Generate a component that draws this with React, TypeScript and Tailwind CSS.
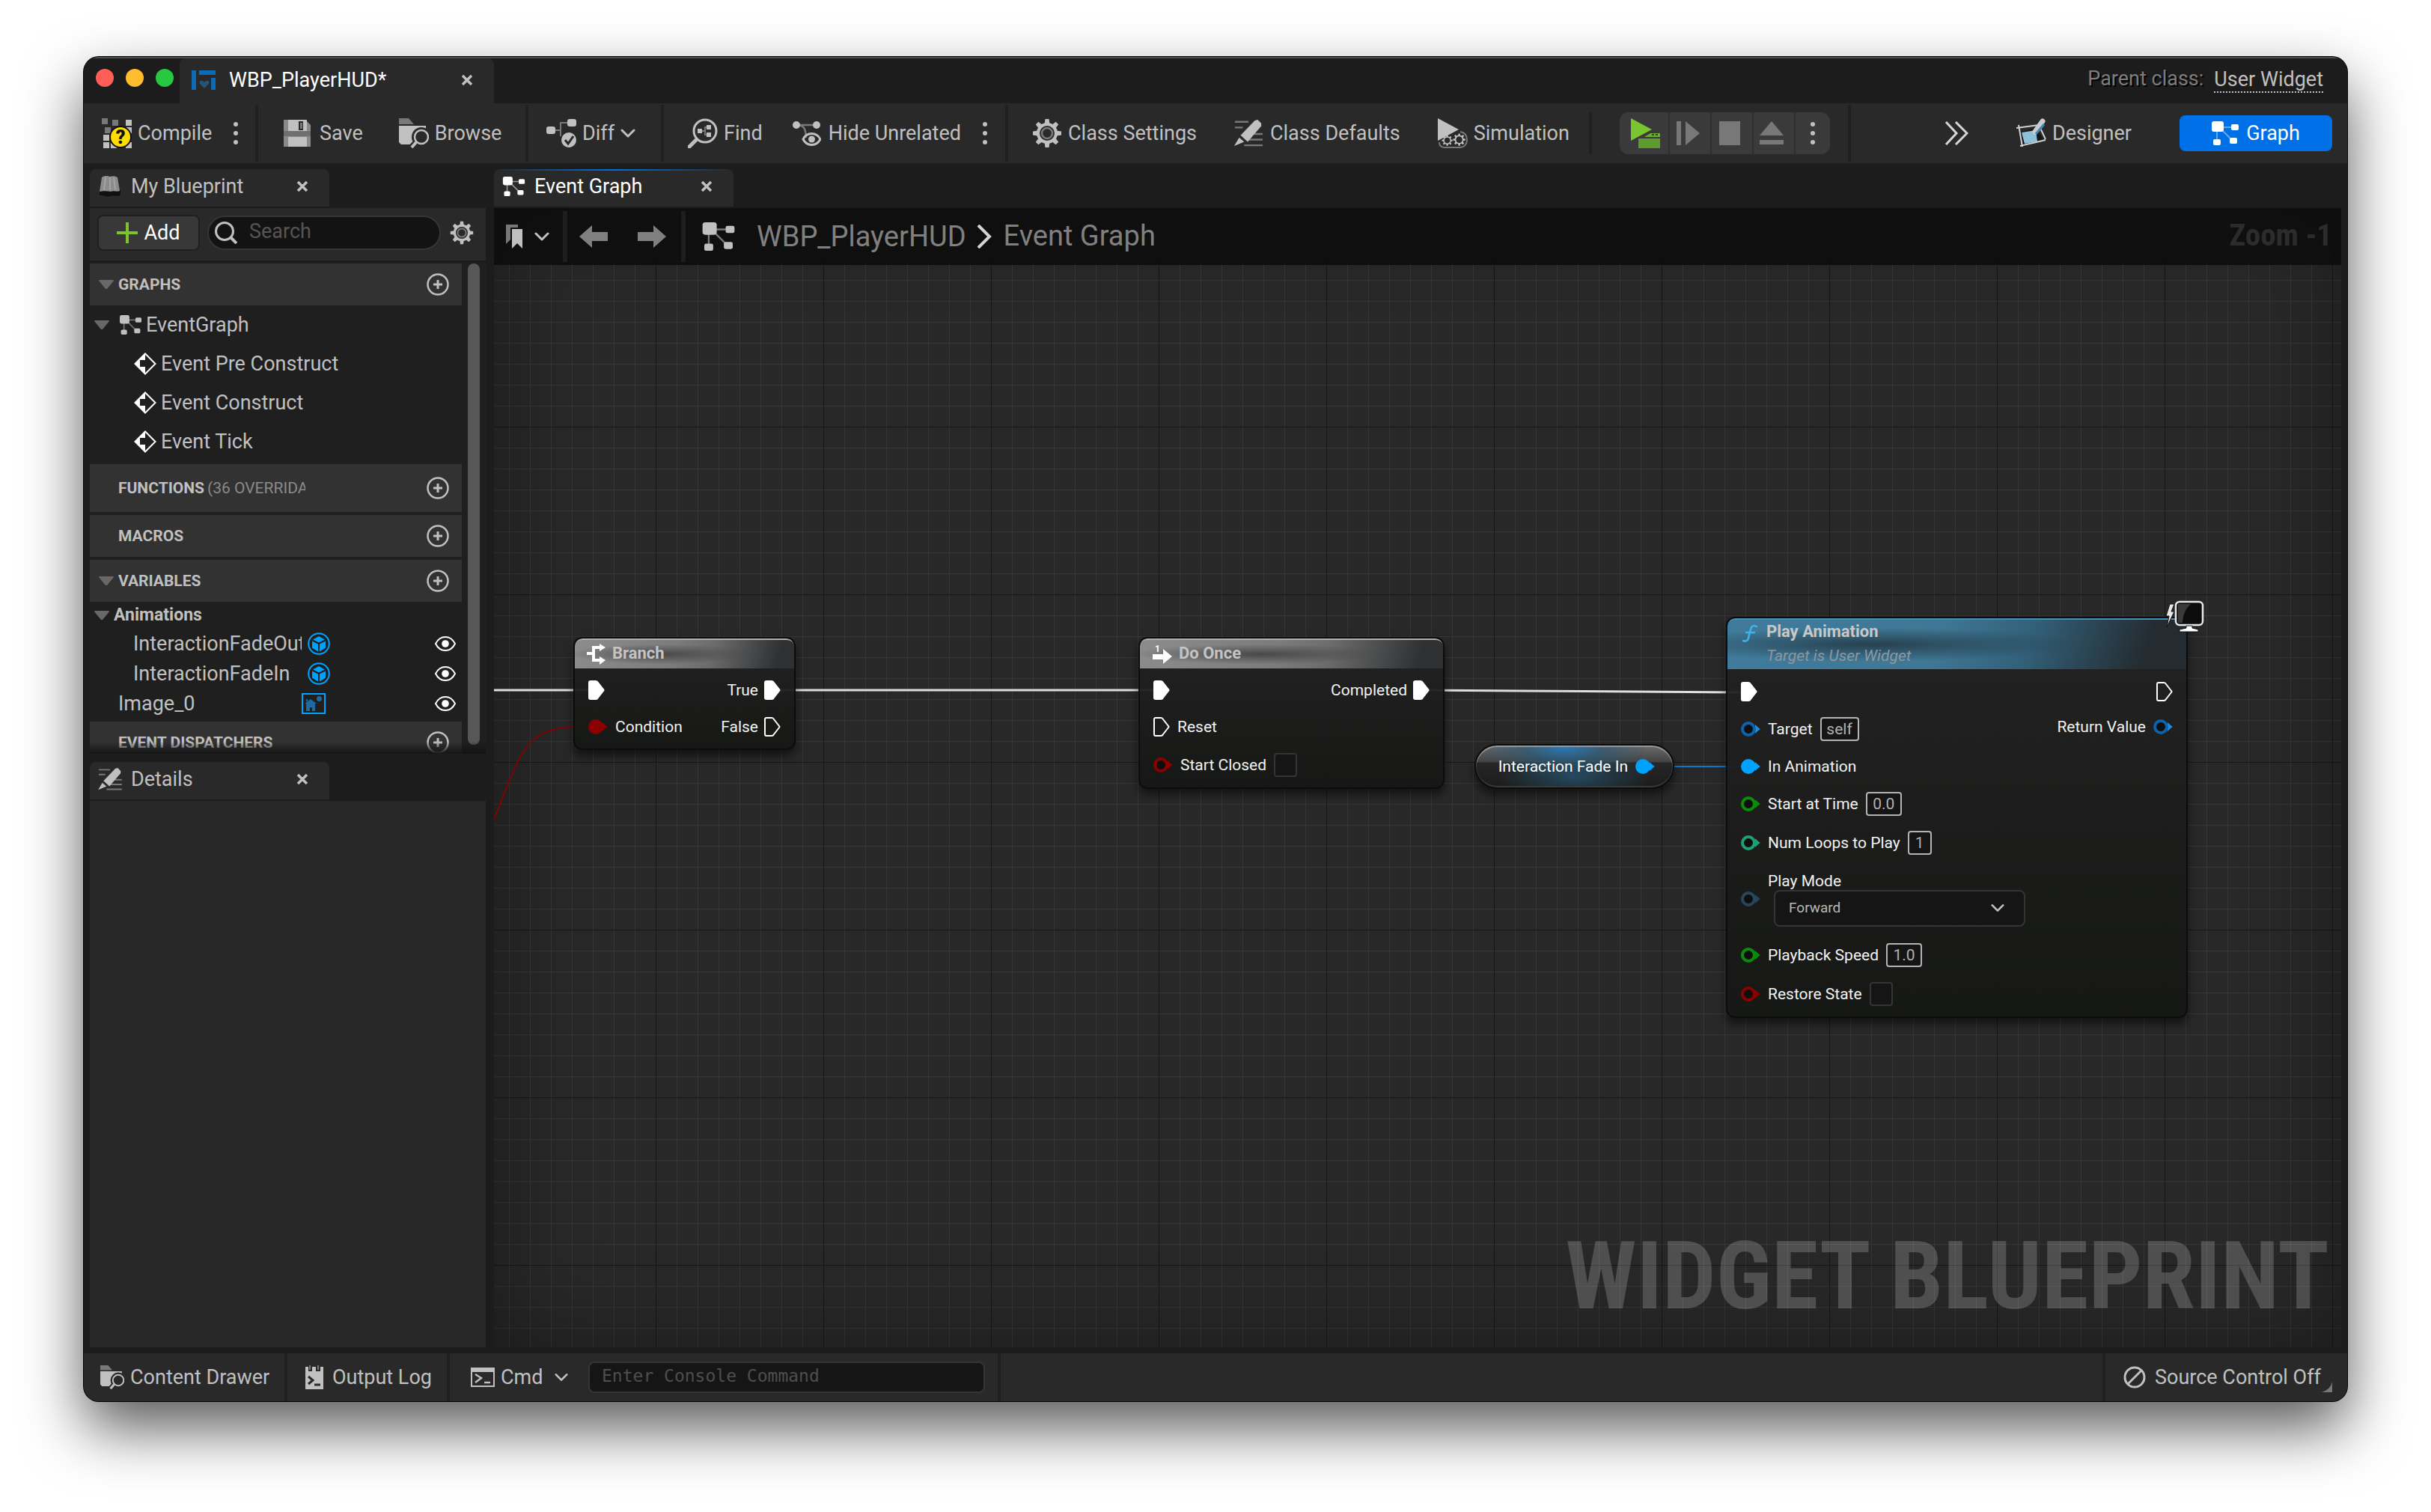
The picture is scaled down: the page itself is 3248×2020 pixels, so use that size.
import type { ReactNode } from "react";

type IconProps = { className?: string };

const L = "#c0c0c0";
const G = "#787878";

function GraphIcon({ className = "w-9 h-8", color = L, wire = G }: IconProps & { color?: string; wire?: string }) {
  return (
    <svg viewBox="0 0 36 32" className={`shrink-0 ${className}`} fill={color}>
      <g stroke={wire} strokeWidth="2">
        <path d="M14 8H28M7 12V26M12 10L27 25" fill="none" />
      </g>
      <rect width="16" height="14" rx="3" />
      <rect x="26" y="4" width="10" height="8" rx="2" />
      <rect x="2" y="24" width="10" height="8" rx="2" />
      <rect x="24" y="22" width="10" height="8" rx="2" />
    </svg>
  );
}

function WidgetIcon() {
  return (
    <svg viewBox="0 0 32 26" className="w-8 h-[26px] shrink-0" fill="#0d6bb5">
      <rect width="6" height="26" />
      <rect x="10" width="22" height="6" />
      <rect x="26" y="10" width="6" height="16" />
      <path d="M17 24L11 18C9 14 14 12 17 16C20 12 25 14 23 18Z" fill="#295372" />
    </svg>
  );
}

function CompileIcon() {
  return (
    <svg viewBox="0 0 40 40" className="size-10 shrink-0" fill={L}>
      <g fill={G}>
        <rect width="8" height="8" />
        <rect x="14" y="2" width="8" height="8" />
        <rect x="4" y="12" width="8" height="8" />
      </g>
      <rect x="32" y="2" width="8" height="8" />
      <rect x="32" y="12" width="8" height="8" />
      <rect x="2" y="22" width="8" height="8" />
      <rect x="2" y="32" width="8" height="8" />
      <rect x="12" y="32" width="8" height="8" />
      <rect x="32" y="32" width="8" height="8" />
      <circle cx="25" cy="25" r="14" fill="#ffdd00" stroke="#111" strokeWidth="2" />
      <text x="25" y="34" textAnchor="middle" fontSize="25" fontWeight="900" fontFamily="Roboto, sans-serif" fill="#111">
        ?
      </text>
    </svg>
  );
}

function SaveIcon() {
  return (
    <svg viewBox="0 0 36 36" className="size-9 shrink-0">
      <path d="M0 0H29L36 7V36H0Z" fill="#8a8a8a" />
      <rect x="6" width="25" height="15" fill={L} />
      <rect x="20" y="2" width="6" height="12" fill="#2a2a2a" />
      <rect x="22" y="4" width="3" height="8" fill={G} />
      <path d="M0 15H36V22H0Z" fill="#707070" />
      <rect x="6" y="23" width="25" height="13" fill={L} />
    </svg>
  );
}

function BrowseIcon({ className = "size-10" }: IconProps) {
  return (
    <svg viewBox="0 0 40 40" className={`shrink-0 ${className}`}>
      <path d="M0 0H13L20 8H0Z" fill={G} />
      <path d="M0 10H38V34H17L15 35H3L0 32Z" fill={L} />
      <circle cx="30" cy="25" r="13" fill="#292929" />
      <path d="M23 33L15 41" stroke="#292929" strokeWidth="9" />
      <rect x="36" y="10" width="4" height="8" fill="#292929" />
      <circle cx="30" cy="25" r="9" fill="none" stroke={L} strokeWidth="2.5" />
      <path d="M24 31L17 39" stroke={L} strokeWidth="4" />
    </svg>
  );
}

function DiffIcon() {
  return (
    <svg viewBox="0 0 40 40" className="size-10 shrink-0">
      <path d="M10 16H19V6H30M19 14V24" fill="none" stroke={G} strokeWidth="2" />
      <rect y="11" width="12" height="10" rx="3" fill={L} />
      <rect x="28" y="1" width="12" height="10" rx="3" fill={L} />
      <circle cx="30" cy="29" r="10" fill={L} />
      <path d="M25 29L29 34L36 24" fill="none" stroke="#292929" strokeWidth="3" />
    </svg>
  );
}

function FindIcon() {
  return (
    <svg viewBox="0 0 40 40" className="size-10 shrink-0">
      <circle cx="23" cy="17" r="15" fill="none" stroke={L} strokeWidth="3" />
      <path d="M11 29L2 38" stroke={L} strokeWidth="5" strokeLinecap="round" />
      <path d="M16 17H22M27 12H23V22H27" fill="none" stroke={G} strokeWidth="2" />
      <path d="M13 14H19V20H13ZM25 9H31V15H25ZM25 19H31V25H25Z" fill={L} />
    </svg>
  );
}

function HideIcon() {
  return (
    <svg viewBox="0 0 38 36" className="w-[38px] h-9 shrink-0">
      <path d="M5 7H32M7 7C18 8 17 16 18 24" fill="none" stroke={G} strokeWidth="2.5" />
      <circle cx="5" cy="7" r="5" fill={L} />
      <circle cx="32" cy="7" r="5" fill={L} />
      <path d="M14 26C19 16 32 16 37 26C32 36 19 36 14 26Z" fill="none" stroke={L} strokeWidth="3" />
      <circle cx="25.500" cy="26" r="4.500" fill={L} />
    </svg>
  );
}

function GearShape({ color = L, inner = G }: { color?: string; inner?: string }) {
  return (
    <g>
      <circle cx="20" cy="20" r="12" fill="none" stroke={color} strokeWidth="4" />
      <circle cx="20" cy="20" r="7" fill="none" stroke={inner} strokeWidth="2.500" />
      {[0, 45, 90, 135, 180, 225, 270, 315].map((a) => (
        <path key={a} d="M16.500 8L17.500 1H22.500L23.500 8Z" fill={color} transform={`rotate(${a} 20 20)`} />
      ))}
    </g>
  );
}

function GearIcon({ className = "size-10" }: IconProps) {
  return (
    <svg viewBox="0 0 40 40" className={`shrink-0 ${className}`}>
      <GearShape />
    </svg>
  );
}

function PencilIcon({ className = "size-[38px]" }: IconProps) {
  return (
    <svg viewBox="0 0 40 38" className={`shrink-0 ${className}`}>
      <path d="M1 3H20M1 11H12M28 20H40M21 28H40M14 36H40" stroke={G} strokeWidth="2.500" />
      <path d="M33 0L38 5V9L19 31L9 22L29 1Z" fill={L} />
      <path d="M7 25L14 31L0 37Z" fill={L} />
    </svg>
  );
}

function SimulationIcon() {
  return (
    <svg viewBox="0 0 40 40" className="size-10 shrink-0">
      <path d="M0 0L28 15L0 30Z" fill={L} />
      <path d="M2 32C2 37 5 39 10 39H29C36 39 39 34 39 29C39 23 36 19 30 18" fill="none" stroke={G} strokeWidth="2" />
      <g transform="translate(5 22) scale(.38)">
        <GearShape inner="#292929" />
      </g>
      <g transform="translate(20 20) scale(.43)">
        <GearShape inner="#292929" />
      </g>
    </svg>
  );
}

function PlayIcon() {
  return (
    <svg viewBox="0 0 40 40" className="size-10 shrink-0">
      <path d="M0 0L28 15L0 30Z" fill="#7bc32f" />
      <path d="M26 20H39V25H18Z" fill="#6cae2c" />
      <path d="M28 22H31M33 22H36" stroke="#2f4a18" strokeWidth="2" />
      <path d="M10 27H39V40H10Z" fill="#5f9a2c" />
    </svg>
  );
}

function DesignerIcon() {
  return (
    <svg viewBox="0 0 40 40" className="size-10 shrink-0">
      <path d="M6 18L26 13L36 28L10 38Z" fill="#151515" />
      <path d="M7 19L26 16L28 31L11 34Z" fill="#8fc0da" />
      <path d="M0 13L30 9M30 9L39 28M3 9L8 38M39 29L5 37" stroke="#d0d0d0" strokeWidth="2" fill="none" />
      <path d="M35 4L25 18" stroke="#c8ccd0" strokeWidth="7" strokeLinecap="round" />
      <path d="M37 8L26 21" stroke="#3f88b4" strokeWidth="3" />
    </svg>
  );
}

function BookIcon() {
  return (
    <svg viewBox="0 0 32 30" className="w-8 h-[30px] shrink-0">
      <path d="M2 20H30V26C26 30 20 26 16 28C10 30 6 26 2 27Z" fill="#101010" />
      <path d="M5 3C9 0 13 1 16 2C19 1 23 1 26 3L29 21C25 23 21 20 17 22C12 21 6 21 2 22Z" fill="#8c8c8c" />
      <path d="M10 3L8 20M16 3V20M21 3L23 20" stroke="#a4a4a4" strokeWidth="2" />
    </svg>
  );
}

function Chevron({ className = "w-5 h-3" }: IconProps) {
  return (
    <svg viewBox="0 0 20 12" className={`shrink-0 ${className}`} fill="none" stroke={L} strokeWidth="3" strokeLinecap="round" strokeLinejoin="round">
      <path d="M2 2L10 10L18 2" />
    </svg>
  );
}

function Dots({ label }: { label: string }) {
  return (
    <button aria-label={label} className="shrink-0">
      <svg viewBox="0 0 8 32" className="w-2 h-8" fill={L}>
        <circle cx="4" cy="4" r="3" />
        <circle cx="4" cy="16" r="3" />
        <circle cx="4" cy="28" r="3" />
      </svg>
    </button>
  );
}

function Close({ label }: { label: string }) {
  return (
    <button aria-label={label} className="shrink-0">
      <svg viewBox="0 0 16 16" className="size-4" stroke={L} strokeWidth="3.500">
        <path d="M2 2L14 14M14 2L2 14" />
      </svg>
    </button>
  );
}

function PlusCircle({ label }: { label: string }) {
  return (
    <button aria-label={label} className="mr-[17px] shrink-0">
      <svg viewBox="0 0 30 30" className="size-[30px]" fill="none" stroke={L} strokeWidth="2.500">
        <circle cx="15" cy="15" r="13.500" />
        <path d="M15 9V21M9 15H21" strokeWidth="3" />
      </svg>
    </button>
  );
}

function Caret() {
  return (
    <svg viewBox="0 0 20 12" className="w-5 h-3 shrink-0" fill="#686868">
      <path d="M1 0H19Q20 0 20 1L11 12H9L0 1Q0 0 1 0Z" />
    </svg>
  );
}

function EventIcon() {
  return (
    <svg viewBox="0 0 30 30" className="size-[30px] shrink-0">
      <path d="M15 1.500L28.500 15L15 28.500L1.500 15Z" fill="none" stroke="#fff" strokeWidth="2" />
      <path d="M15 1V10H8V19H15V29L1 15Z" fill="#fff" />
    </svg>
  );
}

function ObjectIcon() {
  return (
    <svg viewBox="0 0 30 30" className="ml-2 size-[30px] shrink-0" fill="#00a2ff">
      <circle cx="15" cy="15" r="13.800" fill="none" stroke="#00a2ff" strokeWidth="2" />
      <path d="M15 5L23 9.500L15 13.500L7 9.500ZM6 11.500L14 15.500V25.500L6 20.500ZM24 11.500L16 15.500V25.500L24 20.500Z" />
    </svg>
  );
}

function ImageIcon() {
  return (
    <svg viewBox="0 0 32 28" className="w-8 h-7 shrink-0">
      <rect x="1" y="1" width="30" height="26" fill="none" stroke="#00a2ff" strokeWidth="2" />
      <path d="M4 14L12 8L20 14H18V24H14V19H11V24H6V14ZM6 8H8V11H6Z" fill="#1d6ca0" />
      <circle cx="23.500" cy="7.500" r="3.500" fill="#1d6ca0" />
    </svg>
  );
}

function EyeIcon() {
  return (
    <svg viewBox="0 0 28 20" className="w-7 h-5">
      <path d="M1 10C7 -2 21 -2 27 10C21 22 7 22 1 10Z" fill="none" stroke="#fff" strokeWidth="2" />
      <circle cx="14" cy="10" r="4.800" fill="#fff" />
    </svg>
  );
}

function Sep({ className = "h-19" }: IconProps) {
  return <div className={`w-1 shrink-0 bg-[#202020] ${className}`} />;
}

function ToolButton({ icon, children, gap = "gap-2" }: { icon: ReactNode; children: ReactNode; gap?: string }) {
  return (
    <button className={`flex items-center whitespace-nowrap shrink-0 ${gap}`}>
      {icon}
      <span>{children}</span>
    </button>
  );
}

function TitleBar() {
  return (
    <header className="flex h-[62px] shrink-0 items-stretch border-t-2 border-[#4b4d4b] bg-[#1c1c1c]">
      <div className="flex w-32 shrink-0 items-center gap-4 pb-2 pl-4">
        <button aria-label="Close window" className="size-6 rounded-full bg-[#ff5f57]" />
        <button aria-label="Minimize window" className="size-6 rounded-full bg-[#febc2e]" />
        <button aria-label="Zoom window" className="size-6 rounded-full bg-[#28c840]" />
      </div>
      <div className="flex w-[420px] shrink-0 items-center rounded-t-lg bg-[#292929] pb-0.5 pl-4 pr-7">
        <WidgetIcon />
        <button className="ml-[18px] flex-1 text-left text-white">WBP_PlayerHUD*</button>
        <Close label="Close WBP_PlayerHUD" />
      </div>
      <div className="flex flex-1 items-center justify-end gap-3.5 pb-0.5 pr-8">
        <span className="pb-1 text-[#7c7c7c] [text-shadow:2px_2px_0_#000]">Parent class:</span>
        <a href="#user-widget" className="border-b-2 border-dotted border-[#c0c0c0]">
          User Widget
        </a>
      </div>
    </header>
  );
}

function Toolbar() {
  return (
    <div className="flex h-20 shrink-0 items-center bg-[#292929]">
      <div className="flex w-[229px] shrink-0 items-center gap-7 pl-6">
        <ToolButton icon={<CompileIcon />}>Compile</ToolButton>
        <Dots label="Compile options" />
      </div>
      <Sep />
      <div className="flex w-[357px] shrink-0 items-center gap-12 pl-[34px]">
        <ToolButton icon={<SaveIcon />} gap="gap-3">Save</ToolButton>
        <ToolButton icon={<BrowseIcon />}>Browse</ToolButton>
      </div>
      <Sep />
      <div className="flex w-[177px] shrink-0 items-center gap-2 pl-6">
        <ToolButton icon={<DiffIcon />}>Diff</ToolButton>
        <Chevron />
      </div>
      <Sep />
      <div className="flex w-[456px] shrink-0 items-center pl-8">
        <ToolButton icon={<FindIcon />}>Find</ToolButton>
        <div className="ml-10 flex items-center gap-7">
          <ToolButton icon={<HideIcon />} gap="gap-2.5">Hide Unrelated</ToolButton>
          <Dots label="Hide unrelated options" />
        </div>
      </div>
      <Sep />
      <div className="flex w-[776px] shrink-0 items-center gap-[50px] pl-8">
        <ToolButton icon={<GearIcon />}>Class Settings</ToolButton>
        <ToolButton icon={<PencilIcon />} gap="gap-2.5">Class Defaults</ToolButton>
        <ToolButton icon={<SimulationIcon />}>Simulation</ToolButton>
      </div>
      <Sep className="h-14" />
      <div className="flex w-[342px] shrink-0 items-center pl-[37px]">
        <div className="flex h-14 items-stretch gap-0.5 overflow-hidden rounded-xl bg-[#2f2f2f]">
          <button aria-label="Play" className="flex w-[65px] items-center bg-[#3a3a3a] pl-[15px]">
            <PlayIcon />
          </button>
          <button aria-label="Step" className="flex w-[54px] items-center justify-center bg-[#3a3a3a] pr-1">
            <svg viewBox="0 0 32 32" className="size-8" fill={G}>
              <path d="M0 0H6V32H0ZM12 0L31 16L12 32Z" />
            </svg>
          </button>
          <button aria-label="Stop" className="flex w-[54px] items-center justify-center bg-[#3a3a3a] pr-1.5">
            <svg viewBox="0 0 28 32" className="h-8 w-7" fill={G}>
              <rect width="28" height="32" />
            </svg>
          </button>
          <button aria-label="Eject" className="flex w-[54px] items-center justify-center bg-[#3a3a3a] pr-1.5">
            <svg viewBox="0 0 32 32" className="size-8" fill={G}>
              <path d="M16 0L32 19H0ZM0 25H32V31H0Z" />
            </svg>
          </button>
          <div className="flex w-[46px] items-center justify-center bg-[#3a3a3a]">
            <Dots label="Play options" />
          </div>
        </div>
      </div>
      <Sep />
      <div className="flex flex-1 items-center justify-end gap-16 pr-5">
        <button aria-label="More tools">
          <svg viewBox="0 0 32 32" className="size-8" fill="none" stroke="#d6d6d6" strokeWidth="3">
            <path d="M2 1L16 16L2 31M15 1L30 16L15 31" />
          </svg>
        </button>
        <ToolButton icon={<DesignerIcon />}>Designer</ToolButton>
        <button className="flex h-12 w-[204px] items-center justify-center gap-2.5 rounded-lg bg-[#0070e8] text-white">
          <GraphIcon color="#fff" wire="#5fa8f0" />
          Graph
        </button>
      </div>
    </div>
  );
}

function PanelTab({ icon, title, active = false }: { icon: ReactNode; title: string; active?: boolean }) {
  return (
    <div className={`relative flex h-[50px] w-80 shrink-0 items-center gap-3 overflow-hidden rounded-t-lg bg-[#292929] pb-1 pl-[11px] pr-7 ${active ? "text-white" : ""}`}>
      {active && <div className="absolute inset-x-0 top-0 h-0.5 bg-linear-to-r from-transparent via-[#0070e0] to-transparent" />}
      {icon}
      <button className="flex-1 text-left">{title}</button>
      <Close label={`Close ${title}`} />
    </div>
  );
}

function SectionHeader({ title, note, caret, height = "h-14" }: { title: string; note?: string; caret?: boolean; height?: string }) {
  return (
    <div className={`flex shrink-0 items-center bg-[#323232] pl-3 text-[21px] ${height}`}>
      <div className="flex w-[26px] shrink-0">{caret && <Caret />}</div>
      <div className="flex flex-1 items-center">
        <div className="flex max-w-[250px] gap-1 overflow-hidden whitespace-nowrap">
          <h2 className="font-bold">{title}</h2>
          {note && <span className="text-[#8a8a8a]">{note}</span>}
        </div>
      </div>
      <PlusCircle label={`Add to ${title.toLowerCase()}`} />
    </div>
  );
}

function VariableRow({ name, indent, icon }: { name: string; indent: string; icon: ReactNode }) {
  return (
    <li className={`flex h-10 items-center ${indent}`}>
      <button className="flex-1 overflow-hidden whitespace-nowrap text-left">{name}</button>
      <div className="flex w-[214px] shrink-0 items-center justify-between pr-2">
        {icon}
        <button aria-label={`Toggle ${name} visibility`}>
          <EyeIcon />
        </button>
      </div>
    </li>
  );
}

function Sidebar() {
  return (
    <aside className="flex w-[529px] shrink-0 flex-col">
      <PanelTab icon={<BookIcon />} title="My Blueprint" />
      <div className="mt-0.5 flex h-[70px] shrink-0 items-center bg-[#292929] pb-1 pl-2.5 pr-4">
        <button className="flex h-12 w-[137px] items-center justify-center gap-2 rounded-lg border-2 border-[#1f1f1f] bg-[#383838] text-white">
          <svg viewBox="0 0 28 28" className="size-7" stroke="#7bc32f" strokeWidth="4">
            <path d="M14 0V28M0 14H28" />
          </svg>
          Add
        </button>
        <label className="ml-2.5 flex h-[46px] w-[312px] items-center gap-4 rounded-full border-2 border-[#353535] bg-[#131313] pl-2">
          <svg viewBox="0 0 30 30" className="size-[30px] shrink-0" fill="none" stroke={L} strokeWidth="3">
            <circle cx="13" cy="13" r="11.500" />
            <path d="M21 21L29 29" strokeWidth="4" />
          </svg>
          <input aria-label="Search blueprint" placeholder="Search" className="min-w-0 flex-1 bg-transparent pb-1 outline-none placeholder:text-[#555]" />
        </label>
        <button aria-label="Blueprint view settings" className="ml-3">
          <GearIcon className="size-8" />
        </button>
      </div>
      <div className="relative mt-1 flex h-[655px] shrink-0 overflow-hidden bg-[#1f1f1f]">
        <div className="flex w-[497px] shrink-0 flex-col">
          <SectionHeader title="GRAPHS" caret />
          <ul className="shrink-0">
            <li className="flex h-13 items-center pl-1.5">
              <Caret />
              <GraphIcon className="ml-3.5 h-[26px] w-[29px]" />
              <button className="ml-1.5">EventGraph</button>
            </li>
            {["Event Pre Construct", "Event Construct", "Event Tick"].map((name) => (
              <li key={name} className="flex h-13 items-center gap-1.5 pl-[59px]">
                <EventIcon />
                <button>{name}</button>
              </li>
            ))}
          </ul>
          <div className="mt-1 flex shrink-0 flex-col gap-1">
            <SectionHeader title="FUNCTIONS" note="(36 OVERRIDABLE)" height="h-16" />
            <SectionHeader title="MACROS" />
            <SectionHeader title="VARIABLES" caret />
          </div>
          <div className="flex h-9 shrink-0 items-center gap-1.5 pl-1.5">
            <Caret />
            <h3 className="text-[23px] font-bold">Animations</h3>
          </div>
          <ul className="mb-1 shrink-0">
            <VariableRow name="InteractionFadeOut" indent="pl-[58px]" icon={<ObjectIcon />} />
            <VariableRow name="InteractionFadeIn" indent="pl-[58px]" icon={<ObjectIcon />} />
            <VariableRow name="Image_0" indent="pl-[38px]" icon={<ImageIcon />} />
          </ul>
          <SectionHeader title="EVENT DISPATCHERS" />
        </div>
        <div className="ml-2 h-[643px] w-4 rounded-full bg-[#575757]" />
        <div className="absolute inset-x-0 bottom-0 h-4 bg-linear-to-t from-[#141414] to-transparent" />
      </div>
      <div className="mt-[11px] shrink-0">
        <PanelTab icon={<PencilIcon className="h-[30px] w-8" />} title="Details" />
      </div>
      <div className="mt-0.5 flex-1 bg-[#282828]" />
    </aside>
  );
}

function ExecPin({ filled = false }: { filled?: boolean }) {
  return (
    <svg viewBox="0 0 22 26" className="h-[26px] w-[22px] shrink-0" fill={filled ? "#fff" : "none"} stroke="#fff" strokeWidth="2" strokeLinejoin="round">
      <path d="M1 3Q1 1 3 1H10Q12 1 13 3L20 12Q21 13 20 14L13 23Q12 25 10 25H3Q1 25 1 23Z" />
    </svg>
  );
}

function DataPin({ color, tip = color, filled = false }: { color: string; tip?: string; filled?: boolean }) {
  return (
    <svg viewBox="0 0 26 20" className="h-5 w-[26px] shrink-0">
      <path d="M19 4Q24 9 26 10Q24 11 19 16Z" fill={tip} />
      <circle cx="10" cy="10" r="8" fill={filled ? color : "#0e0e0e"} stroke={color} strokeWidth="4" />
    </svg>
  );
}

function Row({ children, className = "h-[50px] gap-2.5" }: { children?: ReactNode; className?: string }) {
  return <div className={`flex items-center whitespace-nowrap ${className}`}>{children}</div>;
}

function CheckField({ label }: { label: string }) {
  return (
    <label className="flex items-center gap-2.5">
      {label}
      <input type="checkbox" className="h-8 w-[31px] appearance-none rounded border-2 border-[#343434] bg-[#151515]" />
    </label>
  );
}

function ValueField({ label, value, width }: { label: string; value: string; width: string }) {
  return (
    <label className="flex items-center gap-2.5">
      {label}
      <input defaultValue={value} className={`h-8 rounded border-2 border-[#b4b4b4] bg-[#151515] text-center text-[21px] text-[#b0b0b0] outline-none ${width}`} />
    </label>
  );
}

const nodeBox =
  "absolute flex flex-col overflow-hidden rounded-xl border-2 border-[#0c0c0c] bg-linear-to-b from-[#222222f2] to-[#151714f2] text-[21px] leading-6 text-[#f2f2f2] shadow-[0_8px_12px_rgba(0,0,0,0.5)]";

function GrayHeader({ icon, title, gap }: { icon: ReactNode; title: string; gap: string }) {
  return (
    <div className={`flex h-10 shrink-0 items-center rounded-t-[10px] border-t-2 border-[#b0b0b0] bg-[radial-gradient(ellipse_at_40%_50%,#484848_0%,#48484800_50%),linear-gradient(105deg,#8c8c8c_0%,#7c7c7c_45%,#6c6c6c_62%,#2e3032_92%)] pb-0.5 pl-4 text-[22px] font-bold text-[#c4c4c4] ${gap}`}>
      {icon}
      {title}
    </div>
  );
}

function BranchNode() {
  return (
    <section aria-label="Branch" className={`${nodeBox} left-[106px] top-[573px] h-[151px] w-[297px]`}>
      <GrayHeader
        title="Branch"
        gap="gap-2"
        icon={
          <svg viewBox="0 0 26 28" className="mt-0.5 h-7 w-[26px]">
            <path d="M0 13H8M18 5H9V22H18" fill="none" stroke="#fff" strokeWidth="4" />
            <path d="M17 0L25 5L17 10ZM17 17L25 22L17 28Z" fill="#fff" />
          </svg>
        }
      />
      <div className="flex justify-between px-4.5 pt-1">
        <div>
          <Row><ExecPin filled /></Row>
          <Row className="h-12 gap-2.5"><DataPin color="#8b0000" filled />Condition</Row>
        </div>
        <div className="flex flex-col items-end">
          <Row className="h-[50px] gap-2">True<ExecPin filled /></Row>
          <Row className="h-12 gap-2">False<ExecPin /></Row>
        </div>
      </div>
    </section>
  );
}

function DoOnceNode() {
  return (
    <section aria-label="Do Once" className={`${nodeBox} left-[861px] top-[573px] h-[203px] w-[409px]`}>
      <GrayHeader
        title="Do Once"
        gap="gap-2"
        icon={
          <svg viewBox="0 0 28 28" className="mt-0.5 size-7">
            <path d="M1 14H15V7L27 17L15 27V21H1Z" fill="#fff" />
            <text x="4" y="11" fontSize="12" fontWeight="700" fontFamily="Roboto, sans-serif" fill="#fff">1</text>
          </svg>
        }
      />
      <div className="flex justify-between px-4.5 pt-1">
        <div>
          <Row><ExecPin filled /></Row>
          <Row className="h-12 gap-2.5"><ExecPin />Reset</Row>
          <Row className="h-[54px] gap-2.5"><DataPin color="#8b0000" /><CheckField label="Start Closed" /></Row>
        </div>
        <Row className="h-[50px] gap-2">Completed<ExecPin filled /></Row>
      </div>
    </section>
  );
}

function FadeInNode() {
  return (
    <section aria-label="Interaction Fade In" className="absolute left-[1310px] top-[716px] flex h-[60px] w-[267px] items-center justify-end gap-2.5 rounded-[30px] border-2 border-[#0c0c0c] bg-[radial-gradient(ellipse_at_45%_5%,#2478bce0_0%,#2a5874b0_25%,transparent_55%),radial-gradient(ellipse_at_50%_75%,#23485e_0%,transparent_55%),linear-gradient(to_bottom,#6a6a6a_0%,#444_38%,#262626_42%,#1c1c1c_100%)] pr-6 text-[21px] leading-6 text-white shadow-[inset_0_2px_1px_#9a9a9a,inset_0_-2px_1px_#3a3a3a,0_8px_12px_rgba(0,0,0,0.5)]">
      Interaction Fade In
      <DataPin color="#00a2ff" filled />
    </section>
  );
}

function PlayAnimationNode() {
  return (
    <>
      <section aria-label="Play Animation" className={`${nodeBox} left-[1646px] top-[546px] h-[536px] w-[617px]`}>
        <div className="flex h-[68px] shrink-0 gap-3 rounded-t-[10px] border-t-2 border-[#4a8fb8] bg-[radial-gradient(ellipse_at_32%_50%,#27404e_0%,#27404e00_48%),linear-gradient(110deg,#3f7b9c_0%,#3f7896_45%,#326079_65%,#242c31_90%)] pl-5">
          <svg viewBox="0 0 20 24" className="mt-1.5 h-6 w-5" fill="none" stroke="#3fb2ee" strokeWidth="2.500" strokeLinecap="round">
            <path d="M1 22C7 24 8 20 9 14L11 7C12 2 15 1 19 3M5 11H16" />
          </svg>
          <div>
            <h3 className="text-[22px] leading-8 font-bold text-[#c8c8c8]">Play Animation</h3>
            <p className="text-[21px] leading-8 text-[#8d989e] italic">Target is User Widget</p>
          </div>
        </div>
        <div className="flex justify-between px-4.5 pt-[5px]">
          <div>
            <Row><ExecPin filled /></Row>
            <Row><DataPin color="#0d62ae" tip="#1f8fe0" /><ValueField label="Target" value="self" width="w-[52px]" /></Row>
            <Row><DataPin color="#00a2ff" filled />In Animation</Row>
            <Row><DataPin color="#0a8c0a" /><ValueField label="Start at Time" value="0.0" width="w-12" /></Row>
            <Row className="h-[54px] gap-2.5"><DataPin color="#1f9f72" /><ValueField label="Num Loops to Play" value="1" width="w-8" /></Row>
            <Row className="h-24 gap-2.5">
              <DataPin color="#28465a" />
              <label className="flex flex-col">
                Play Mode
                <span className="relative ml-2 flex items-center">
                  <select className="h-[49px] w-[336px] appearance-none rounded-lg border-2 border-[#343434] bg-[#151515] pl-4.5 text-[19px] text-[#b8b8b8] outline-none">
                    <option>Forward</option>
                  </select>
                  <Chevron className="pointer-events-none absolute right-7 h-3 w-[18px]" />
                </span>
              </label>
            </Row>
            <Row className="h-[54px] gap-2.5"><DataPin color="#0a8c0a" /><ValueField label="Playback Speed" value="1.0" width="w-12" /></Row>
            <Row><DataPin color="#8b0000" /><CheckField label="Restore State" /></Row>
          </div>
          <div className="flex flex-col items-end">
            <Row><ExecPin /></Row>
            <Row className="h-11 gap-2.5">Return Value<DataPin color="#0d62ae" tip="#1f8fe0" /></Row>
          </div>
        </div>
      </section>
      <svg viewBox="0 0 52 46" className="absolute left-[2233px] top-[522px] h-[46px] w-[52px]">
        <path d="M6 7H12L8 17H12L2 38L5 23H1Z" fill="#e8e8e8" stroke="#111" strokeWidth="1" />
        <rect x="14" y="4" width="36" height="31" rx="5" fill="#0c0c0c" stroke="#e8e8e8" strokeWidth="2.500" />
        <path d="M17 7H34C26 14 24 22 23 32H17Z" fill="#3a3a3a" />
        <path d="M28 36H36V39L44 41V44H19V41L28 39Z" fill="#fff" stroke="#111" strokeWidth="1" />
      </svg>
    </>
  );
}

function GraphPanel() {
  return (
    <main className="flex min-w-0 flex-1 flex-col">
      <PanelTab icon={<GraphIcon className="h-[26px] w-[31px]" color="#fff" wire="#999" />} title="Event Graph" active />
      <div className="relative mt-0.5 flex-1 overflow-hidden bg-[#282828] bg-[linear-gradient(to_right,#181818_1px,transparent_1px),linear-gradient(to_bottom,#181818_1px,transparent_1px),linear-gradient(to_right,#363636_1px,transparent_1px),linear-gradient(to_bottom,#363636_1px,transparent_1px)] bg-size-[224px_224px,224px_224px,28px_28px,28px_28px] bg-position-[216px_0,0_68px,20px_0,0_12px]">
        <div className="absolute inset-0 shadow-[inset_0_0_120px_rgba(0,0,0,0.35)]" />
        <div className="relative flex h-[76px] items-center bg-[#0c0c0cd9] text-[38px] text-[#808080]">
          <button aria-label="Bookmarks" className="ml-4 flex items-center gap-4">
            <svg viewBox="0 0 22 32" className="h-8 w-[22px]">
              <path d="M0 0H16V4H6V20L0 26Z" fill={G} />
              <path d="M8 6H22V32L15 25L8 32Z" fill={L} />
            </svg>
            <Chevron />
          </button>
          <div className="ml-[18px] h-17 w-1.5 bg-[#1e1e1e]" />
          <button aria-label="Back" className="ml-4">
            <svg viewBox="0 0 38 30" className="h-[30px] w-[38px]" fill="#808080">
              <path d="M17 0V9H38V21H17V30L0 15Z" />
            </svg>
          </button>
          <button aria-label="Forward" className="ml-10">
            <svg viewBox="0 0 38 30" className="h-[30px] w-[38px]" fill="#808080">
              <path d="M21 0V9H0V21H21V30L38 15Z" />
            </svg>
          </button>
          <div className="ml-5 h-17 w-1.5 bg-[#1e1e1e]" />
          <GraphIcon className="ml-[22px] h-[38px] w-11" />
          <button className="ml-[29px]">WBP_PlayerHUD</button>
          <svg viewBox="0 0 20 32" className="ml-3.5 h-8 w-5" fill="none" stroke="#d4d4d4" strokeWidth="4">
            <path d="M2 1L17 16L2 31" />
          </svg>
          <span className="ml-4 pb-0.5">Event Graph</span>
          <span className="ml-auto mr-3 pb-1 font-['Roboto_Condensed',Roboto,sans-serif] text-[41px] font-bold text-[#2c2c2c]">Zoom -1</span>
        </div>
        <p className="absolute bottom-5 right-4 font-['Roboto_Condensed',Roboto,sans-serif] text-[127px] leading-[150px] font-bold whitespace-nowrap text-[#ffffff30]">WIDGET BLUEPRINT</p>
        <svg className="absolute left-0 top-0 h-full w-full" fill="none">
          <path d="M0 644H126M382 644H882M1228 644C1400 644 1500 647 1666 647" stroke="#dcdedc" strokeWidth="3" />
          <path d="M0 817C40 715 42 694 122 692" stroke="#7d0505" strokeWidth="2" />
          <path d="M1550 746H1668" stroke="#0a78cc" strokeWidth="2" />
        </svg>
        <BranchNode />
        <DoOnceNode />
        <FadeInNode />
        <PlayAnimationNode />
      </div>
    </main>
  );
}

function StatusBar() {
  return (
    <footer className="flex h-16 shrink-0 items-stretch bg-[#292929] pl-0.5">
      <div className="flex w-[266px] shrink-0 items-center pl-5">
        <ToolButton icon={<BrowseIcon className="size-8" />}>Content Drawer</ToolButton>
      </div>
      <Sep className="h-16" />
      <div className="flex w-[213px] shrink-0 items-center pl-6">
        <ToolButton
          gap="gap-3"
          icon={
            <svg viewBox="0 0 24 32" className="h-8 w-6">
              <path d="M0 2H4V8H9V2H14V8H20V2H24V32H0Z" fill={L} />
              <path d="M6 0V6M17 0V6" stroke={G} strokeWidth="2" />
              <path d="M4 15L10 20L4 25M12 26H20" stroke="#292929" strokeWidth="3" fill="none" />
            </svg>
          }
        >
          Output Log
        </ToolButton>
      </div>
      <Sep className="h-16" />
      <div className="flex w-[732px] shrink-0 items-center pl-7">
        <ToolButton
          icon={
            <svg viewBox="0 0 32 26" className="h-[26px] w-8">
              <path d="M1 1H31V25H1Z" fill="none" stroke={L} strokeWidth="2" />
              <path d="M0 0H32V6H0Z" fill={L} />
              <path d="M6 9L14 14L6 20M18 20H26" stroke={L} strokeWidth="2.500" fill="none" />
            </svg>
          }
        >
          Cmd
        </ToolButton>
        <Chevron className="ml-4 h-3 w-[18px]" />
        <input aria-label="Console command" placeholder="Enter Console Command" className="ml-auto mr-[17px] h-[42px] w-[530px] rounded-lg border-2 border-[#353535] bg-[#151515] px-4 pb-1 font-['DejaVu_Sans_Mono',monospace] text-[23px] outline-none placeholder:text-[#4e4e4e]" />
      </div>
      <Sep className="h-16" />
      <div className="flex-1" />
      <Sep className="h-16" />
      <div className="relative flex w-[323px] shrink-0 items-center pl-6">
        <ToolButton
          gap="gap-3"
          icon={
            <svg viewBox="0 0 30 30" className="size-[30px]" fill="none" stroke={L} strokeWidth="3">
              <circle cx="15" cy="15" r="13" />
              <path d="M24 6L6 24" />
            </svg>
          }
        >
          Source Control Off
        </ToolButton>
        <svg viewBox="0 0 14 14" className="absolute bottom-3 right-5 size-3.5" fill={G}>
          <path d="M14 0V14H0Q12 10 14 0Z" />
        </svg>
      </div>
    </footer>
  );
}

export default function App() {
  return (
    <div className="flex min-h-screen bg-white px-28 pt-[76px] pb-[148px] font-[Roboto,sans-serif] text-[27px] leading-8 text-[#c0c0c0]">
      <div className="flex min-w-0 flex-1 flex-col overflow-hidden rounded-[20px] bg-[#1c1c1c] shadow-[0_0_0_1px_#000,0_36px_80px_rgba(0,0,0,0.65)]">
        <TitleBar />
        <Toolbar />
        <div className="flex flex-1 gap-[11px] p-2">
          <Sidebar />
          <GraphPanel />
        </div>
        <StatusBar />
      </div>
    </div>
  );
}
